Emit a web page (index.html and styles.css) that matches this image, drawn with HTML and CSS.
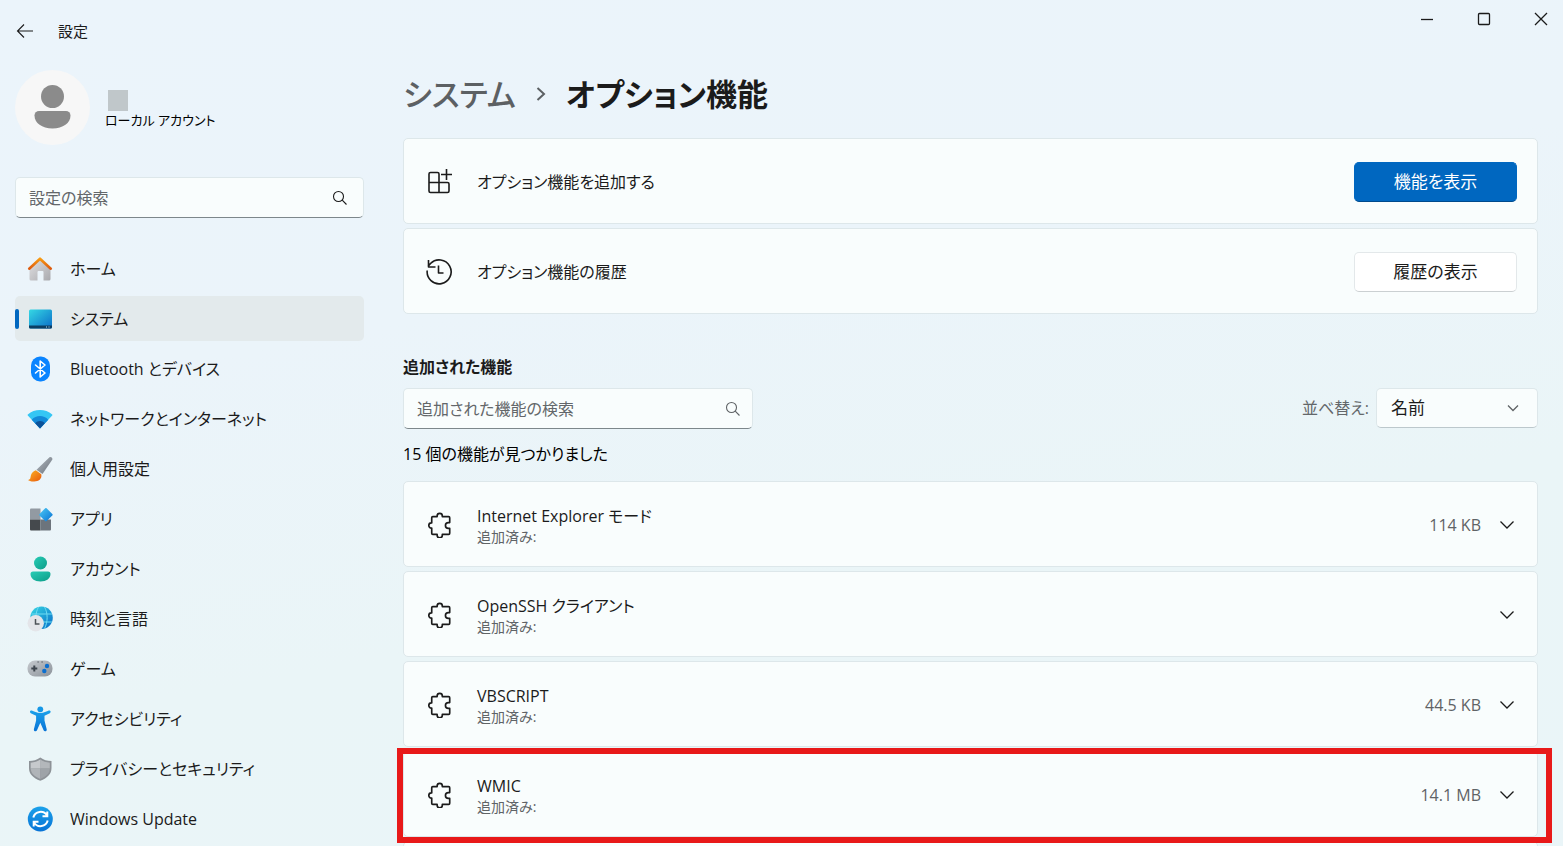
FILE: index.html
```html
<!DOCTYPE html>
<html lang="ja">
<head>
    <meta charset="UTF-8">
    <meta name="viewport" content="width=device-width, initial-scale=1.0">
    <title>設定</title>
    <link rel="stylesheet" href="styles.css">
</head>
<body>
    <svg class="defs" aria-hidden="true">
        <defs>
            <linearGradient id="roof" x1="0" y1="0" x2="0" y2="1"><stop offset="0" stop-color="#f79a12"/><stop offset="1" stop-color="#dd5a10"/></linearGradient>
            <linearGradient id="wall" x1="0" y1="0" x2="1" y2="1"><stop offset="0" stop-color="#e2e2e4"/><stop offset="1" stop-color="#a9a9ad"/></linearGradient>
            <linearGradient id="screen" x1="0" y1="0" x2="1" y2="1"><stop offset="0" stop-color="#35d8e4"/><stop offset="1" stop-color="#0a6cc8"/></linearGradient>
            <linearGradient id="handle" x1="0" y1="0" x2="1" y2="1"><stop offset="0" stop-color="#b4bac1"/><stop offset="1" stop-color="#69727b"/></linearGradient>
            <linearGradient id="bristle" x1="0" y1="0" x2="1" y2="1"><stop offset="0" stop-color="#fcb526"/><stop offset="1" stop-color="#e8590c"/></linearGradient>
            <linearGradient id="diamond" x1="0" y1="0" x2="1" y2="1"><stop offset="0" stop-color="#4cc9f5"/><stop offset="1" stop-color="#0873d4"/></linearGradient>
            <linearGradient id="teal" x1="0" y1="0" x2="1" y2="1"><stop offset="0" stop-color="#28cdb6"/><stop offset="1" stop-color="#0c9c88"/></linearGradient>
            <linearGradient id="silver" x1="0" y1="0" x2="1" y2="1"><stop offset="0" stop-color="#c6cacf"/><stop offset="1" stop-color="#8b9299"/></linearGradient>
            <linearGradient id="blue" x1="0" y1="0" x2="0" y2="1"><stop offset="0" stop-color="#1ba1ea"/><stop offset="1" stop-color="#0873d6"/></linearGradient>
        </defs>
        <symbol id="puzzle" viewBox="-2 0 25 25">
            <path d="M4.500 4.500H8.700V3.800a2.500 2.500 0 0 1 5 0v.7h6.100a1 1 0 0 1 1 1v4.700h-1.300a2.800 2.800 0 0 0 0 5.600h1.300v4.700a1 1 0 0 1-1 1h-6.100v.9a2.500 2.500 0 0 1-5 0v-.9H4.500a1 1 0 0 1-1-1v-5h-.3a2.500 2.500 0 0 1 0-5h.3v-5a1 1 0 0 1 1-1z"/>
        </symbol>
        <symbol id="search" viewBox="0 0 16 16"><circle cx="6.500" cy="6.500" r="5"/><path d="M10.200 10.200L14.500 14.500"/></symbol>
        <symbol id="chevron" viewBox="0 0 16 16"><path d="M1.500 4.500L8 11l6.500-6.500"/></symbol>
    </svg>

    <header class="titlebar">
        <div class="titlebar-left">
            <button class="back" aria-label="戻る">
                <svg class="line thin" width="18" height="16" viewBox="0 0 18 16"><path d="M17 8H1.500M8 1.500L1.500 8 8 14.500"/></svg>
            </button>
            <span class="app-name">設定</span>
        </div>
        <div class="window-controls">
            <button aria-label="最小化"><svg class="line" width="14" height="14" viewBox="0 0 14 14"><path d="M1 7.500h12"/></svg></button>
            <button aria-label="最大化"><svg class="line" width="14" height="14" viewBox="0 0 14 14"><rect x="1.500" y="1.500" width="11" height="11" rx="1"/></svg></button>
            <button aria-label="閉じる"><svg class="line" width="14" height="14" viewBox="0 0 14 14"><path d="M1 1l12 12M13 1L1 13"/></svg></button>
        </div>
    </header>

    <div class="layout">
        <aside class="sidebar">
            <div class="profile">
                <svg class="avatar" width="75" height="75" viewBox="0 0 75 75">
                    <circle cx="37.500" cy="37.500" r="37.500" fill="#f7f7f7"/>
                    <circle cx="37.500" cy="26.500" r="11.500" fill="#8b8b8b"/>
                    <path d="M24 41h27a4.500 4.500 0 0 1 4.500 4.500C55.500 53 48 58.500 37.500 58.500S19.500 53 19.500 45.500A4.500 4.500 0 0 1 24 41z" fill="#8b8b8b"/>
                </svg>
                <div class="profile-text">
                    <span class="profile-name"></span>
                    <span class="profile-type">ローカル アカウント</span>
                </div>
            </div>

            <div class="search-box">
                <input type="text" placeholder="設定の検索" aria-label="設定の検索">
                <svg class="line thin" width="16" height="16"><use href="#search"/></svg>
            </div>

            <nav class="nav">
                <a href="#">
                    <svg width="26" height="26" viewBox="0 0 26 26"><path d="M2.500 12L13 2.500 23.500 12v11a1.500 1.500 0 0 1-1.500 1.500h-5.500V16a1 1 0 0 0-1-1h-4a1 1 0 0 0-1 1v8.500H4A1.500 1.500 0 0 1 2.500 23z" fill="url(#wall)"/><path d="M2.200 12.700L13 2.700l10.800 10" fill="none" stroke="url(#roof)" stroke-width="2.600" stroke-linecap="round" stroke-linejoin="round"/></svg>
                    ホーム
                </a>
                <a href="#" class="active" aria-current="page">
                    <svg width="26" height="26" viewBox="0 0 26 26"><rect x="2" y="3.500" width="23" height="19" rx="1.500" fill="url(#screen)"/><path d="M2 19.500h23V21a1.500 1.500 0 0 1-1.500 1.500h-20A1.500 1.500 0 0 1 2 21z" fill="#0b3d62"/><path d="M19 21h1M21.500 21h1" stroke="#b8dff2" stroke-width="1"/></svg>
                    システム
                </a>
                <a href="#">
                    <svg width="26" height="26" viewBox="0 0 26 26"><rect x="4" y="0.500" width="19" height="25" rx="9" fill="#0a84ff"/><path d="M8.500 9l9.500 8-4.800 4V5L18 9l-9.500 8" fill="none" stroke="#fff" stroke-width="1.600" stroke-linejoin="round" stroke-linecap="round"/></svg>
                    Bluetooth とデバイス
                </a>
                <a href="#">
                    <svg width="26" height="26" viewBox="0 0 26 26"><path d="M13 22.500L.8 9.500a.8.800 0 0 1 0-1.100C4.200 5.300 8.500 4 13 4s8.800 1.300 12.200 4.400a.8.800 0 0 1 0 1.100z" fill="#35c6f4"/><path d="M13 22.500L4.700 13.700C7 11.300 9.800 10 13 10s6 1.300 8.300 3.700z" fill="#1389d8"/><path d="M13 22.500l-4.800-5.200c1.300-1.400 3-2.200 4.800-2.200s3.500.8 4.800 2.200z" fill="#0c5299"/></svg>
                    ネットワークとインターネット
                </a>
                <a href="#">
                    <svg width="26" height="26" viewBox="0 0 26 26"><path d="M22.500 1.200c1.300-1 3.600.8 2.700 2.600L15.500 18 9.500 13.800z" fill="url(#handle)"/><path d="M8.800 14.300l5.500 4c1 5-3.300 7.500-7.800 7.200-2.700 0-4.700-.6-5.500-1.500 3-.5 2.200-2.200 3.100-5.200.7-2.300 2.600-3.800 4.700-4.500z" fill="url(#bristle)"/></svg>
                    個人用設定
                </a>
                <a href="#">
                    <svg width="26" height="26" viewBox="0 0 26 26"><path d="M4 2.500h9.500v11H3v-10a1 1 0 0 1 1-1z" fill="#929aa2"/><path d="M3 13.500h10.500v11H4a1 1 0 0 1-1-1z" fill="#45494d"/><path d="M13.500 13.500H24v10a1 1 0 0 1-1 1h-9.500z" fill="#6c747c"/><path d="M18.200 2.300a1 1 0 0 1 1.400 0l5.700 5.700a1 1 0 0 1 0 1.400l-5.700 5.700a1 1 0 0 1-1.400 0l-5.700-5.700a1 1 0 0 1 0-1.400z" fill="url(#diamond)"/></svg>
                    アプリ
                </a>
                <a href="#">
                    <svg width="26" height="26" viewBox="0 0 26 26"><circle cx="13.500" cy="7" r="6.500" fill="url(#teal)"/><path d="M6 15.500h15a2.500 2.500 0 0 1 2.500 2.500c0 4.500-4 7.500-10 7.500s-10-3-10-7.500A2.500 2.500 0 0 1 6 15.500z" fill="url(#teal)"/></svg>
                    アカウント
                </a>
                <a href="#">
                    <svg width="26" height="26" viewBox="0 0 26 26"><circle cx="14.500" cy="11.700" r="11.300" fill="url(#screen)"/><path d="M4.500 8h20.500M4.500 16h20.500M11.500 1c-3.500 6-3.500 15 0 21.500M17.500 1c3.500 6 3.500 15 0 21.500" fill="none" stroke="#6fdcf2" stroke-width="1"/><circle cx="8.700" cy="17.300" r="8.200" fill="#e4e5e9"/><path d="M8.500 13v5h4" fill="none" stroke="#4e5357" stroke-width="1.500"/></svg>
                    時刻と言語
                </a>
                <a href="#">
                    <svg width="26" height="26" viewBox="0 0 26 26"><rect x=".5" y="4.500" width="25" height="16" rx="7.500" fill="url(#silver)"/><path d="M7.300 9.500v6M4.300 12.500h6" stroke="#3e464e" stroke-width="2"/><circle cx="20" cy="10" r="2.200" fill="#0b6fcf"/><circle cx="17.300" cy="15" r="2.200" fill="#0b6fcf"/><path d="M10.500 6h1.200M14.500 6h1.200" stroke="#3e464e" stroke-width="1.200"/></svg>
                    ゲーム
                </a>
                <a href="#">
                    <svg width="26" height="26" viewBox="0 0 26 26"><circle cx="13.300" cy="3.300" r="2.900" fill="#1597e6"/><path d="M4.800 4.500c2 .8 5.300 2.500 8.500 2.500s6.500-1.700 8.500-2.500c1.900-.5 2.500 1.900 1 2.700l-5.300 2.600v4.700l2.200 8.800c.4 2-2.300 2.900-3.100 1l-3.300-7.600L10 24.300c-.8 1.900-3.500 1-3.100-1l2.200-8.800V9.800L3.800 7.200c-1.500-.8-.9-3.200 1-2.700z" fill="url(#blue)"/></svg>
                    アクセシビリティ
                </a>
                <a href="#">
                    <svg width="26" height="26" viewBox="0 0 26 26"><path d="M13.300 1.500c3.200 2.400 7 3.500 11.200 3.500v7c0 6-4 10-11.200 12.800C6 22 2 18 2 12V5c4.200 0 8-1.100 11.300-3.500z" fill="#8d9297"/><path d="M13.300 3.500c2.600 1.800 6 3 9.500 3.200v5.800h-9.500z" fill="#b3b7bb"/><path d="M13.300 3.500C10.700 5.300 7.200 6.500 3.700 6.700v5.800h9.600z" fill="#c6c9cc"/><path d="M3.700 12.500h9.600v10.400c-5.500-2.300-9.400-5.400-9.600-10.400z" fill="#b0b4b8"/><path d="M22.800 12.500h-9.500v10.400c5.500-2.300 9.300-5.400 9.500-10.400z" fill="#9ea3a8"/></svg>
                    プライバシーとセキュリティ
                </a>
                <a href="#">
                    <svg width="26" height="26" viewBox="0 0 26 26"><circle cx="13.300" cy="13" r="12.500" fill="url(#blue)"/><path d="M6.300 11.500A7.500 7.500 0 0 1 20 9.500M20.300 5.500v4.800h-4.800M20.700 14.500A7.500 7.500 0 0 1 7 16.500M6.700 20.500v-4.800h4.800" fill="none" stroke="#fff" stroke-width="2"/></svg>
                    Windows Update
                </a>
            </nav>
        </aside>

        <main class="content">
            <h1 class="breadcrumb">
                <a href="#">システム</a>
                <svg class="line thick" width="12" height="16" viewBox="0 0 12 16"><path d="M2.500 2l6.500 6-6.500 6"/></svg>
                <span>オプション機能</span>
            </h1>

            <div class="cards">
                <div class="card">
                    <svg class="line icon" width="26" height="26" viewBox="0 0 26 26"><path d="M13 13.500V5a1.500 1.500 0 0 0-1.500-1.500h-7A1.500 1.500 0 0 0 3 5v17a1.500 1.500 0 0 0 1.500 1.500h17A1.500 1.500 0 0 0 23 22v-7a1.500 1.500 0 0 0-1.500-1.500H3M13 13.500v10M20.500 0v11M15 5.500h11"/></svg>
                    <span class="card-title">オプション機能を追加する</span>
                    <button class="btn primary">機能を表示</button>
                </div>
                <div class="card">
                    <svg class="line icon" width="26" height="26" viewBox="0 0 26 26"><path d="M1.200 11.500A12 12 0 1 0 4.500 4.500L2 7.500M2.500 1v7h7M12.500 6.500V14h5"/></svg>
                    <span class="card-title">オプション機能の履歴</span>
                    <button class="btn">履歴の表示</button>
                </div>
            </div>

            <h2 class="section-title">追加された機能</h2>
            <div class="toolbar">
                <div class="search-box">
                    <input type="text" placeholder="追加された機能の検索" aria-label="追加された機能の検索">
                    <svg class="line thin muted" width="16" height="16"><use href="#search"/></svg>
                </div>
                <div class="sort">
                    <label for="sort">並べ替え:</label>
                    <div class="select-box">
                        <select id="sort"><option>名前</option></select>
                        <svg class="line muted" width="12" height="12" viewBox="0 0 12 12"><path d="M1 3.500l5 5 5-5"/></svg>
                    </div>
                </div>
            </div>
            <p class="count">15 個の機能が見つかりました</p>

            <div class="cards">
                <div class="card">
                    <svg class="line icon" width="26" height="26"><use href="#puzzle"/></svg>
                    <div class="card-text"><span class="card-title">Internet Explorer モード</span><span class="card-sub">追加済み:</span></div>
                    <span class="size">114 KB</span>
                    <button class="expand" aria-label="展開"><svg class="line" width="16" height="16"><use href="#chevron"/></svg></button>
                </div>
                <div class="card">
                    <svg class="line icon" width="26" height="26"><use href="#puzzle"/></svg>
                    <div class="card-text"><span class="card-title">OpenSSH クライアント</span><span class="card-sub">追加済み:</span></div>
                    <button class="expand" aria-label="展開"><svg class="line" width="16" height="16"><use href="#chevron"/></svg></button>
                </div>
                <div class="card">
                    <svg class="line icon" width="26" height="26"><use href="#puzzle"/></svg>
                    <div class="card-text"><span class="card-title">VBSCRIPT</span><span class="card-sub">追加済み:</span></div>
                    <span class="size">44.5 KB</span>
                    <button class="expand" aria-label="展開"><svg class="line" width="16" height="16"><use href="#chevron"/></svg></button>
                </div>
                <div class="card marked">
                    <svg class="line icon" width="26" height="26"><use href="#puzzle"/></svg>
                    <div class="card-text"><span class="card-title">WMIC</span><span class="card-sub">追加済み:</span></div>
                    <span class="size">14.1 MB</span>
                    <button class="expand" aria-label="展開"><svg class="line" width="16" height="16"><use href="#chevron"/></svg></button>
                </div>
                <div class="card"></div>
            </div>
        </main>
    </div>
</body>
</html>
```
FILE: styles.css
```css
* { box-sizing: border-box; }
body { margin: 0; height: 100vh; overflow: hidden; display: flex; flex-direction: column; font-family: 'Open Sans', 'Noto Sans CJK JP', sans-serif; font-size: 16px; line-height: 24px; font-feature-settings: "palt"; color: #1b1b1b; background: linear-gradient(170deg, #ebf4fb 0%, #ebf4fa 35%, #eaf5f7 65%, #eaf5f8 100%); }
button, input, select { font: inherit; font-feature-settings: inherit; color: inherit; }
button { padding: 0; border: none; background: none; cursor: pointer; }
a { color: inherit; text-decoration: none; }

.defs { position: absolute; width: 0; height: 0; }
.line { fill: none; stroke: #1b1b1b; stroke-width: 1.3; flex-shrink: 0; }
.line.icon { stroke-width: 1.6; stroke-linejoin: round; }
.line.thick { stroke: #5c6063; stroke-width: 2; }
.line.thin { stroke-width: 1.1; }
.line.muted { stroke: #5f6366; }

.titlebar { display: flex; justify-content: space-between; align-items: flex-start; flex-shrink: 0; height: 62px; }
.titlebar-left { display: flex; align-items: center; gap: 24px; height: 61px; padding-left: 16px; }
.back { display: flex; }
.app-name { font-size: 15px; }
.window-controls { display: flex; gap: 13px; }
.window-controls button { display: flex; align-items: center; justify-content: center; width: 44px; height: 38px; }

.layout { display: flex; flex: 1; min-height: 0; overflow: hidden; gap: 39px; padding: 0 25px 0 15px; }

.sidebar { flex: 0 0 349px; padding-top: 8px; }
.profile { display: flex; align-items: center; gap: 15px; margin-bottom: 32px; }
.profile-text { display: flex; flex-direction: column; padding-top: 4px; font-size: 13px; line-height: 18px; color: #000; }
.profile-name { width: 20px; height: 21px; margin-left: 3px; background: #c0c7ca; }

.search-box { display: flex; align-items: center; width: 349px; height: 41px; padding-right: 15px; border: 1px solid #dde7ea; border-bottom-color: #7d878b; border-radius: 5px; background: #f9fdfd; }
.search-box input { flex: 1; min-width: 0; padding: 0 0 0 13px; border: none; outline: none; background: none; }
.search-box input::placeholder { color: #63676a; opacity: 1; }

.nav { display: flex; flex-direction: column; gap: 5px; margin-top: 28px; }
.nav a { position: relative; display: flex; align-items: center; gap: 17px; height: 45px; padding-left: 12px; border-radius: 5px; }
.nav a.active { background: #e3eaec; }
.nav a.active::before { content: ""; position: absolute; left: 0; top: 13px; width: 4px; height: 20px; border-radius: 2px; background: #0067c0; }

.content { flex: 1; min-width: 0; }
.breadcrumb { display: flex; align-items: center; gap: 19px; margin: 0 0 12px; font-size: 31px; line-height: 64px; font-weight: 600; }
.breadcrumb a { color: #5c6063; font-weight: 500; }

.cards { display: flex; flex-direction: column; gap: 4px; }
.card { position: relative; display: flex; align-items: center; height: 86px; padding: 2px 20px 0 22px; border: 1px solid #dde7ea; border-radius: 5px; background: #f9fdfd; }
.card .icon { margin-right: 25px; }
.card-title { flex: 1; }
.card-text { flex: 1; display: flex; flex-direction: column; padding-top: 2px; }
.card-text .card-title { line-height: 22px; }
.card-sub { font-size: 14px; line-height: 20px; color: #5f6366; }
.size { color: #5f6366; }
.expand { display: flex; align-items: center; justify-content: center; width: 20px; height: 20px; margin-left: 16px; }
.btn { width: 163px; height: 40px; border: 1px solid #e3e8ea; border-bottom-color: #cbd0d2; border-radius: 5px; background: #fff; font-size: 17px; }
.btn.primary { border-color: #0067c0; border-bottom-color: #004a8c; background: #0067c0; color: #fff; }
.marked::after { content: ""; position: absolute; top: -4px; right: -15px; bottom: -7px; left: -7px; z-index: 1; border: 6px solid #e81919; pointer-events: none; }

.section-title { margin: 40px 0 8px; font-size: 16px; line-height: 26px; font-weight: 600; }
.toolbar { display: flex; justify-content: space-between; }
.toolbar .search-box { width: 350px; padding-right: 11px; }
.sort { display: flex; align-items: center; gap: 7px; height: 40px; color: #63676a; }
.select-box { display: flex; align-items: center; width: 162px; height: 40px; position: relative; }
.select-box select { width: 100%; height: 40px; padding: 0 34px 0 14px; border: 1px solid #dde7ea; border-bottom-color: #bcc8cc; border-radius: 5px; appearance: none; background: #f9fdfd; color: #1b1b1b; font-size: 17px; }
.select-box svg { position: absolute; right: 19px; pointer-events: none; }
.count { margin: 12px 0 14px; line-height: 26px; color: #000; }
```
